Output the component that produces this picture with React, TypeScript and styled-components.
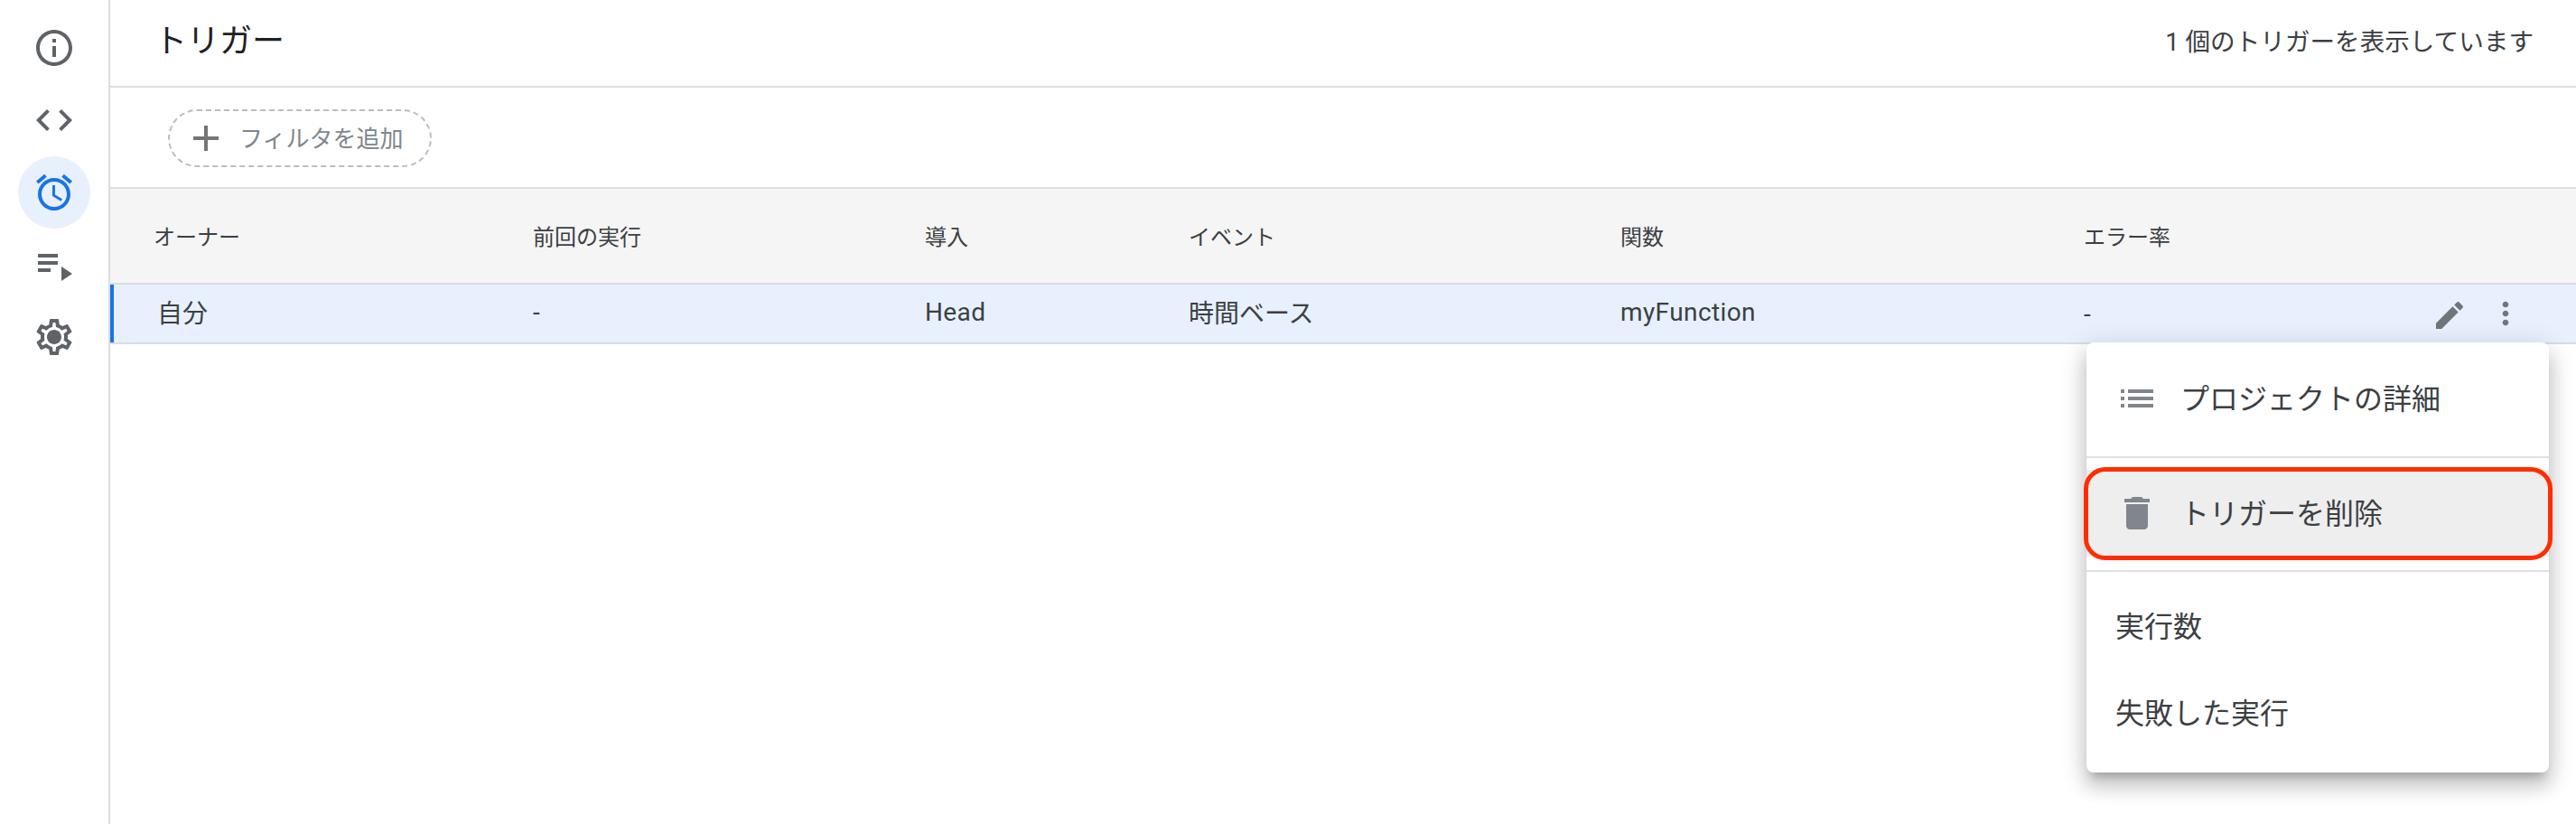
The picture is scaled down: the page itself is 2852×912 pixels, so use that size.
import styled, { createGlobalStyle } from "styled-components";

const GlobalStyle = createGlobalStyle`
    html, body {
        margin: 0;
        height: 100%;
        background: #fff;
        font-family: Roboto, "Noto Sans CJK JP", sans-serif;
        overflow: hidden;
    }
`;

// テーブルの列幅
const COLUMNS = "468px 434px 292px 478px 513px 1fr";

const ICON = {
    info: "M11 7h2v2h-2zm0 4h2v6h-2zm1-9C6.48 2 2 6.48 2 12s4.48 10 10 10 10-4.48 10-10S17.52 2 12 2zm0 18c-4.41 0-8-3.59-8-8s3.59-8 8-8 8 3.59 8 8-3.59 8-8 8z",
    code: "M9.4 16.6L4.8 12l4.6-4.6L8 6l-6 6 6 6 1.4-1.4zm5.2 0l4.6-4.6-4.6-4.6L16 6l6 6-6 6-1.4-1.4z",
    alarm: "M22 5.72l-4.6-3.86-1.29 1.53 4.6 3.86L22 5.72zM7.88 3.39L6.6 1.86 2 5.71l1.29 1.53 4.59-3.85zM12.5 8H11v6l4.75 2.85.75-1.23-4-2.37V8zM12 4c-4.97 0-9 4.03-9 9s4.02 9 9 9c4.97 0 9-4.03 9-9s-4.03-9-9-9zm0 16c-3.87 0-7-3.13-7-7s3.13-7 7-7 7 3.13 7 7-3.13 7-7 7z",
    playlist: "M3 10h11v2H3zm0-4h11v2H3zm0 8h7v2H3zm13-1v8l6-4z",
    settings: "M19.43 12.98c.04-.32.07-.64.07-.98 0-.34-.03-.66-.07-.98l2.11-1.65c.19-.15.24-.42.12-.64l-2-3.46c-.09-.16-.26-.25-.44-.25-.06 0-.12.01-.17.03l-2.49 1c-.52-.4-1.08-.73-1.69-.98l-.38-2.65C14.46 2.18 14.25 2 14 2h-4c-.25 0-.46.18-.49.42l-.38 2.65c-.61.25-1.17.59-1.69.98l-2.49-1c-.06-.02-.12-.03-.18-.03-.17 0-.34.09-.43.25l-2 3.46c-.13.22-.07.49.12.64l2.11 1.65c-.04.32-.07.65-.07.98 0 .33.03.66.07.98l-2.11 1.65c-.19.15-.24.42-.12.64l2 3.46c.09.16.26.25.44.25.06 0 .12-.01.17-.03l2.49-1c.52.4 1.08.73 1.69.98l.38 2.65c.03.24.24.42.49.42h4c.25 0 .46-.18.49-.42l.38-2.65c.61-.25 1.17-.59 1.69-.98l2.49 1c.06.02.12.03.18.03.17 0 .34-.09.43-.25l2-3.46c.12-.22.07-.49-.12-.64l-2.11-1.65zm-1.98-1.71c.04.31.05.52.05.73 0 .21-.02.43-.05.73l-.14 1.13.89.7 1.08.84-.7 1.21-1.27-.51-1.04-.42-.9.68c-.43.32-.84.56-1.25.73l-1.06.43-.16 1.13-.2 1.35h-1.4l-.19-1.35-.16-1.13-1.06-.43c-.43-.18-.83-.41-1.23-.71l-.91-.7-1.06.43-1.27.51-.7-1.21 1.08-.84.89-.7-.14-1.13c-.03-.31-.05-.54-.05-.74s.02-.43.05-.73l.14-1.13-.89-.7-1.08-.84.7-1.21 1.27.51 1.04.42.9-.68c.43-.32.84-.56 1.25-.73l1.06-.43.16-1.13.2-1.35h1.39l.19 1.35.16 1.13 1.06.43c.43.18.83.41 1.23.71l.91.7 1.06-.43 1.27-.51.7 1.21-1.07.85-.89.7.14 1.13zM12 8c-2.21 0-4 1.79-4 4s1.79 4 4 4 4-1.79 4-4-1.79-4-4-4z",
    plus: "M19 13h-6v6h-2v-6H5v-2h6V5h2v6h6v2z",
    edit: "M3 17.25V21h3.75L17.81 9.94l-3.75-3.75L3 17.25zM20.71 7.04c.39-.39.39-1.02 0-1.41l-2.34-2.34c-.39-.39-1.02-.39-1.41 0l-1.83 1.83 3.75 3.75 1.83-1.83z",
    more: "M12 8c1.1 0 2-.9 2-2s-.9-2-2-2-2 .9-2 2 .9 2 2 2zm0 2c-1.1 0-2 .9-2 2s.9 2 2 2 2-.9 2-2-.9-2-2-2zm0 6c-1.1 0-2 .9-2 2s.9 2 2 2 2-.9 2-2-.9-2-2-2z",
    list: "M3 13h2v-2H3v2zm0 4h2v-2H3v2zm0-8h2V7H3v2zm4 4h14v-2H7v2zm0 4h14v-2H7v2zM7 7v2h14V7H7z",
    trash: "M6 19c0 1.1.9 2 2 2h8c1.1 0 2-.9 2-2V7H6v12zM19 4h-3.5l-1-1h-5l-1 1H5v2h14V4z",
};

const Icon = (props: { d: string; size?: number; color: string }) => (
    <IconSvg $size={props.size ?? 48} $color={props.color} viewBox="0 0 24 24">
        <path fillRule="evenodd" d={props.d} />
    </IconSvg>
);

const NAV_ITEMS = [
    { d: ICON.info, active: false },
    { d: ICON.code, active: false },
    { d: ICON.alarm, active: true },
    { d: ICON.playlist, active: false },
    { d: ICON.settings, active: false },
];

export default function App() {
    return (
        <>
            <GlobalStyle />
            <Page>
                <Sidebar>
                    {NAV_ITEMS.map((item) => (
                        <NavItem key={item.d} $active={item.active}>
                            <Icon d={item.d} color={item.active ? "#1a73e8" : "#5f6368"} />
                        </NavItem>
                    ))}
                </Sidebar>
                <Main>
                    <Header>
                        <Title>トリガー</Title>
                        <Count>1 個のトリガーを表示しています</Count>
                    </Header>
                    <FilterBar>
                        <FilterChip>
                            <Icon d={ICON.plus} color="#757575" />
                            <FilterLabel>フィルタを追加</FilterLabel>
                        </FilterChip>
                    </FilterBar>
                    <HeadRow>
                        <HeadCell $first>オーナー</HeadCell>
                        <HeadCell>前回の実行</HeadCell>
                        <HeadCell>導入</HeadCell>
                        <HeadCell>イベント</HeadCell>
                        <HeadCell>関数</HeadCell>
                        <HeadCell>エラー率</HeadCell>
                    </HeadRow>
                    <Row>
                        <Cell $first>自分</Cell>
                        <Cell>-</Cell>
                        <Cell $latin>Head</Cell>
                        <Cell>時間ベース</Cell>
                        <Cell $latin>myFunction</Cell>
                        <LastCell>
                            <span>-</span>
                            <Actions>
                                <EditIcon>
                                    <Icon d={ICON.edit} size={40} color="#70757a" />
                                </EditIcon>
                                <Icon d={ICON.more} size={40} color="#70757a" />
                            </Actions>
                        </LastCell>
                    </Row>
                    <Menu>
                        <MenuSection>
                            <MenuItem>
                                <Icon d={ICON.list} color="#80868b" />
                                <MenuLabel>プロジェクトの詳細</MenuLabel>
                            </MenuItem>
                        </MenuSection>
                        <MenuSection>
                            <MenuItem $selected>
                                <Icon d={ICON.trash} color="#80868b" />
                                <MenuLabel>トリガーを削除</MenuLabel>
                                <Highlight />
                            </MenuItem>
                        </MenuSection>
                        <MenuSection>
                            <MenuItem>
                                <MenuLabel>実行数</MenuLabel>
                            </MenuItem>
                            <MenuItem>
                                <MenuLabel>失敗した実行</MenuLabel>
                            </MenuItem>
                        </MenuSection>
                    </Menu>
                </Main>
            </Page>
        </>
    );
}

const IconSvg = styled.svg<{ $size: number; $color: string }>`
    display: block;
    flex: none;
    width: ${(props) => props.$size}px;
    height: ${(props) => props.$size}px;
    fill: ${(props) => props.$color};
`;

const Page = styled.div`
    display: flex;
    height: 912px;
    color: #3c4043;
    overflow: hidden;
`;

// 左のナビゲーション
const Sidebar = styled.nav`
    width: 120px;
    flex: none;
    padding-top: 13px;
    border-right: 2px solid #dadce0;
    display: flex;
    flex-direction: column;
    align-items: center;
`;

const NavItem = styled.div<{ $active: boolean }>`
    width: 80px;
    height: 80px;
    border-radius: 50%;
    display: flex;
    align-items: center;
    justify-content: center;
    background: ${(props) => (props.$active ? "#e8f0fe" : "transparent")};
`;

const Main = styled.main`
    flex: 1;
    min-width: 0;
    position: relative;
`;

const Header = styled.header`
    height: 95px;
    box-sizing: border-box;
    padding: 0 47px 8px 49px;
    display: flex;
    align-items: center;
    justify-content: space-between;
    border-bottom: 2px solid #dadce0;
    box-sizing: content-box;
    height: 87px;
`;

const Title = styled.h1`
    margin: 0 0 4px;
    font-size: 36px;
    font-weight: 400;
    color: #202124;
`;

const Count = styled.div`
    font-size: 27.6px;
    color: #3c4043;
`;

// フィルタエリア
const FilterBar = styled.div`
    height: 86px;
    padding: 24px 0 0 64px;
    border-bottom: 2px solid #e0e0e0;
`;

const FilterChip = styled.div`
    width: 292px;
    height: 64px;
    box-sizing: border-box;
    border: 2px dashed #bdbdbd;
    border-radius: 32px;
    padding-left: 16px;
    display: flex;
    align-items: center;
    gap: 13px;
    font-size: 26px;
    color: #80868b;
`;

const FilterLabel = styled.span`
    padding-bottom: 4px;
`;

const HeadRow = styled.div`
    height: 104px;
    background: #f5f5f5;
    border-bottom: 2px solid #dadce0;
    display: grid;
    grid-template-columns: ${COLUMNS};
    align-items: center;
`;

const HeadCell = styled.div<{ $first?: boolean }>`
    font-size: 24px;
    color: #3c4043;
    padding-bottom: 2px;
    padding-left: ${(props) => (props.$first ? "48px" : "0")};
`;

const Row = styled.div`
    height: 64px;
    background: #e8f0fe;
    border-bottom: 2px solid #dadce0;
    box-shadow: inset 4px 0 0 #1a73e8;
    display: grid;
    grid-template-columns: ${COLUMNS};
    align-items: center;
`;

const Cell = styled.div<{ $first?: boolean; $latin?: boolean }>`
    font-size: 28px;
    color: #3c4043;
    padding-bottom: 4px;
    padding-left: ${(props) => (props.$first ? "52px" : "0")};
    letter-spacing: ${(props) => (props.$latin ? "0.4px" : "0")};
`;

const LastCell = styled(Cell)`
    display: flex;
    align-items: center;
    justify-content: space-between;
    padding-right: 58px;
    padding-bottom: 0;
`;

const Actions = styled.div`
    display: flex;
    align-items: center;
    gap: 22px;
`;

const EditIcon = styled.div`
    padding-top: 4px;
`;

// メニュー
const Menu = styled.div`
    position: absolute;
    top: 379px;
    right: 30px;
    width: 512px;
    height: 476px;
    background: #fff;
    border-radius: 8px;
    box-shadow: 0 16px 20px 2px rgba(0, 0, 0, 0.14), 0 6px 28px 4px rgba(0, 0, 0, 0.12), 0 10px 10px -6px rgba(0, 0, 0, 0.2);
`;

const MenuSection = styled.div`
    padding: 13px 0 15px;
    border-bottom: 2px solid #e0e0e0;

    &:first-child {
        padding: 14px 0 16px;
    }

    &:last-child {
        border-bottom: none;
        padding: 12px 0 18px;
    }
`;

const MenuItem = styled.div<{ $selected?: boolean }>`
    position: relative;
    height: 96px;
    padding-left: 32px;
    display: flex;
    align-items: center;
    gap: 24px;
    font-size: 32px;
    color: #3c4043;
    background: ${(props) => (props.$selected ? "#eeeeee" : "transparent")};
`;

const MenuLabel = styled.span`
    padding-bottom: 5px;
`;

// 赤い囲み（注釈）
const Highlight = styled.div`
    position: absolute;
    top: -3px;
    bottom: -4px;
    left: -3px;
    right: -4px;
    border: 5px solid #ff2d00;
    border-radius: 24px;
    pointer-events: none;
`;
